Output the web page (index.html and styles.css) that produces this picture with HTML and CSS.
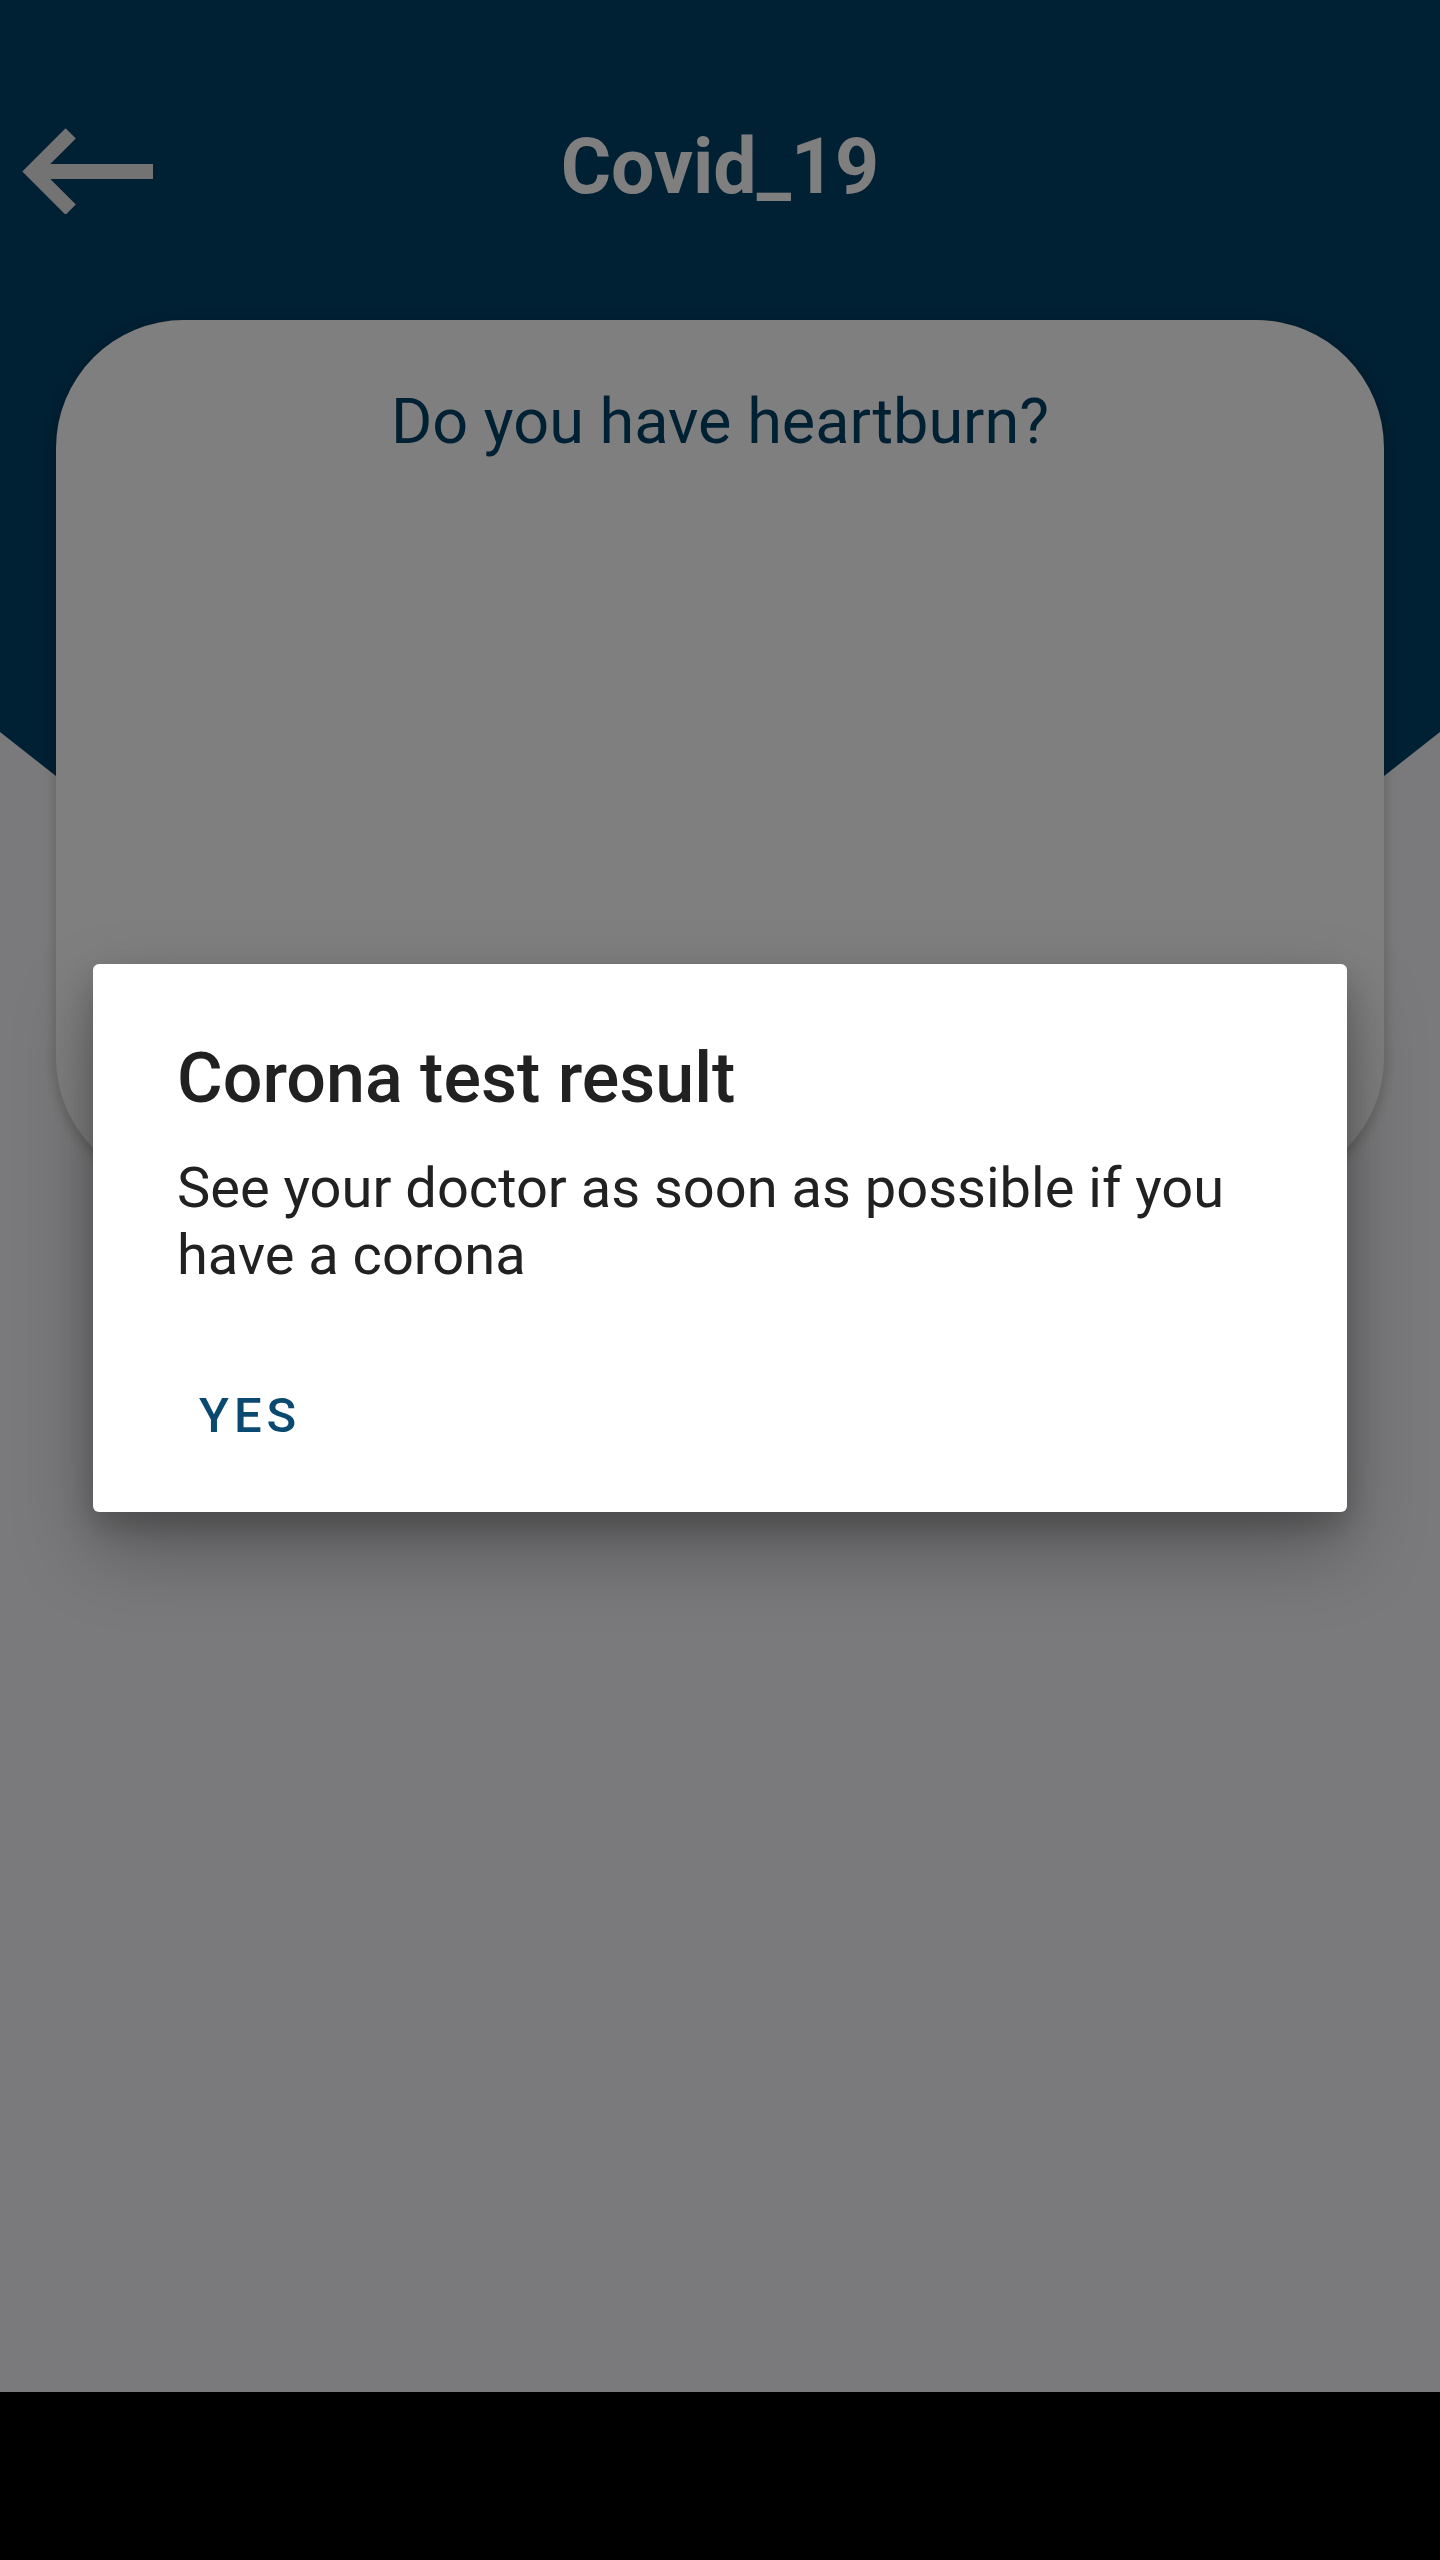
FILE: index.html
```html
<!DOCTYPE html>
<html lang="en">
<head>
<meta charset="utf-8">
<title>Covid_19</title>
<link rel="stylesheet" href="styles.css">
</head>
<body>
<div class="screen">
  <div class="header-bg"></div>
  <header class="topbar">
    <svg class="back" width="160" height="94" viewBox="0 0 160 94" aria-label="Back">
      <polyline points="70.7,13.3 32.6,51.5 70.7,89.7" fill="none" stroke="#e6e6e6" stroke-width="14.5" stroke-linejoin="miter" stroke-linecap="butt"/>
      <line x1="34" y1="51.5" x2="153" y2="51.5" stroke="#e6e6e6" stroke-width="15"/>
    </svg>
    <h1 class="title">Covid_19</h1>
    <div></div>
  </header>
  <main class="card">
    <p class="question">Do you have heartburn?</p>
  </main>
  <div class="scrim">
    <div class="dialog" role="dialog">
      <h2 class="dialog-title">Corona test result</h2>
      <p class="dialog-body">See your doctor as soon as possible if you have a corona</p>
      <div class="dialog-actions">
        <button class="btn">YES</button>
      </div>
    </div>
  </div>
</div>
<div class="navbar"></div>
</body>
</html>
```

FILE: styles.css
```css
html, body {
  margin: 0;
  padding: 0;
}
body {
  width: 1440px;
  height: 2560px;
  background: #000;
  font-family: Roboto, "Liberation Sans", sans-serif;
  overflow: hidden;
}
.screen {
  position: relative;
  height: 2392px;
  background: #f5f5f8;
  overflow: hidden;
}
.header-bg {
  position: absolute;
  top: 0;
  left: 0;
  width: 1440px;
  height: 1298px;
  background: #004066;
  clip-path: polygon(0 0, 100% 0, 100% 732px, 50% 100%, 0 732px);
}
.topbar {
  position: relative;
  display: grid;
  grid-template-columns: 1fr auto 1fr;
  align-items: start;
  padding-top: 120px;
  height: 94px;
}
.back {
  display: block;
  justify-self: start;
}
.title {
  margin: 0;
  padding-top: 1px;
  font-size: 77px;
  line-height: 93px;
  font-weight: 700;
  color: #ffffff;
  text-align: center;
}
.card {
  position: relative;
  margin: 106px 56px 0;
  height: 866px;
  background: #ffffff;
  border-radius: 128px;
  box-shadow: 0 4px 14px rgba(0, 0, 0, 0.22);
  padding-top: 65px;
  box-sizing: border-box;
}
.question {
  margin: 0;
  text-align: center;
  font-size: 63px;
  line-height: 74px;
  color: #004066;
}
.scrim {
  position: absolute;
  inset: 0;
  background: rgba(0, 0, 0, 0.5);
  display: flex;
  justify-content: center;
  align-items: flex-start;
  padding-top: 964px;
  box-sizing: border-box;
}
.dialog {
  width: 1254px;
  height: 548px;
  box-sizing: border-box;
  background: #ffffff;
  border-radius: 6px;
  padding: 73px 84px 0 84px;
  box-shadow: 0 38px 80px rgba(0, 0, 0, 0.28), 0 14px 30px rgba(0, 0, 0, 0.2);
}
.dialog-title {
  margin: 0;
  font-size: 70px;
  line-height: 82px;
  font-weight: 500;
  color: #212121;
}
.dialog-body {
  margin: 36px 0 0;
  font-size: 56px;
  line-height: 67px;
  font-weight: 400;
  color: #212121;
}
.dialog-actions {
  display: flex;
  margin-top: 98px;
}
.btn {
  border: 0;
  background: none;
  padding: 0;
  margin-left: 22px;
  font-family: Roboto, "Liberation Sans", sans-serif;
  font-size: 49px;
  line-height: 57px;
  font-weight: 500;
  letter-spacing: 5px;
  color: #0a4a70;
}
.navbar {
  height: 168px;
  background: #000;
}
```
